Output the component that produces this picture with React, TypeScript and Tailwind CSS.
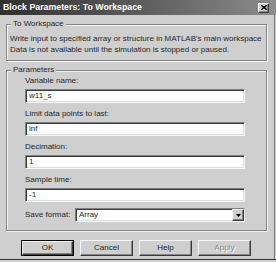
import React from 'react';

const etched = 'border border-[#858585] shadow-[1px_1px_0_#f4f4f4,inset_1px_1px_0_#f4f4f4]';
const sunken =
  'border border-t-[#808080] border-l-[#808080] border-b-[#f6f6f6] border-r-[#f6f6f6] shadow-[inset_1px_1px_0_#3a3a3a,inset_-1px_-1px_0_#dcdcdc]';
const raised =
  'border border-t-[#f6f6f6] border-l-[#f6f6f6] border-b-[#3a3a3a] border-r-[#3a3a3a] shadow-[inset_-1px_-1px_0_#858585]';

const Field = ({ label, value, first }: { label: string; value: string; first?: boolean }) => (
  <div className={first ? '' : 'mt-[6px]'}>
    <div className="h-[10px] leading-[10px] whitespace-nowrap">{label}</div>
    <div className={`mt-[3px] h-[14px] w-[220px] bg-white flex items-center pl-[3px] ${sunken}`}>{value}</div>
  </div>
);

const Btn = ({ children, primary, disabled }: { children: React.ReactNode; primary?: boolean; disabled?: boolean }) => {
  const inner = (
    <div
      className={`h-full w-full flex items-center justify-center bg-[#cfcfcf] ${raised} ${
        disabled ? 'text-[#8a8a8a] [text-shadow:1px_1px_0_#fafafa]' : ''
      }`}
    >
      {children}
    </div>
  );
  return primary ? (
    <div className="h-[16px] w-[53px] border border-black">{inner}</div>
  ) : (
    <div className="h-[16px] w-[53px]">{inner}</div>
  );
};

export default function App() {
  return (
    <div className="relative w-[276px] h-[262px] overflow-hidden bg-[#cfcfcf] font-['Liberation_Sans',Arial,sans-serif] text-[8px] text-[#262626] flex flex-col">
      {/* title bar */}
      <div className="h-[15px] shrink-0 flex items-center bg-linear-to-r from-[#303030] to-[#8c8c8c] pl-[3px] pr-[7px]">
        <span className="text-white font-bold text-[8.8px] leading-none whitespace-nowrap">
          Block Parameters: To Workspace
        </span>
        <div className={`ml-auto w-[11px] h-[10px] bg-[#cfcfcf] flex items-center justify-center ${raised}`}>
          <svg width="6" height="5" viewBox="0 0 6 5">
            <path d="M0 0L6 5M6 0L0 5" stroke="#000" strokeWidth="1.4" />
          </svg>
        </div>
      </div>

      <div className="flex-1 flex flex-col pl-[6px] border-r border-[#7a7a7a] mr-[1px]">
        {/* description group */}
        <div className={`relative mt-[9px] h-[37px] w-[261px] ${etched}`}>
          <span className="absolute left-[4px] top-[-6px] px-[2px] leading-[10px] bg-[#cfcfcf]">To Workspace</span>
          <div className="pt-[8px] pl-[3px] leading-[11px] whitespace-nowrap">
            <div>Write input to specified array or structure in MATLAB's main workspace</div>
            <div>Data is not available until the simulation is stopped or paused.</div>
          </div>
        </div>

        {/* parameters group */}
        <div className={`relative mt-[9px] h-[161px] w-[261px] ${etched}`}>
          <span className="absolute left-[4px] top-[-6px] px-[2px] leading-[10px] bg-[#cfcfcf]">Parameters</span>
          <div className="pt-[5px] pl-[18px]">
            <Field first label="Variable name:" value="w11_s" />
            <Field label="Limit data points to last:" value="inf" />
            <Field label="Decimation:" value="1" />
            <Field label="Sample time:" value="-1" />
            <div className="mt-[6px] flex items-center">
              <span className="w-[50px] whitespace-nowrap">Save format:</span>
              <div className={`h-[14px] w-[170px] bg-white flex items-center pl-[3px] ${sunken}`}>
                <span>Array</span>
                <div className={`ml-auto h-[12px] w-[12px] bg-[#cfcfcf] flex items-center justify-center ${raised}`}>
                  <svg width="5" height="3" viewBox="0 0 5 3">
                    <path d="M0 0H5L2.5 3Z" fill="#000" />
                  </svg>
                </div>
              </div>
            </div>
          </div>
        </div>

        {/* buttons */}
        <div className="mt-[9px] ml-[15px] flex gap-[6px]">
          <Btn primary>OK</Btn>
          <Btn>Cancel</Btn>
          <Btn>Help</Btn>
          <Btn disabled>Apply</Btn>
        </div>
      </div>
      <div className="h-[3px] shrink-0 border-t border-[#333]" />
    </div>
  );
}
